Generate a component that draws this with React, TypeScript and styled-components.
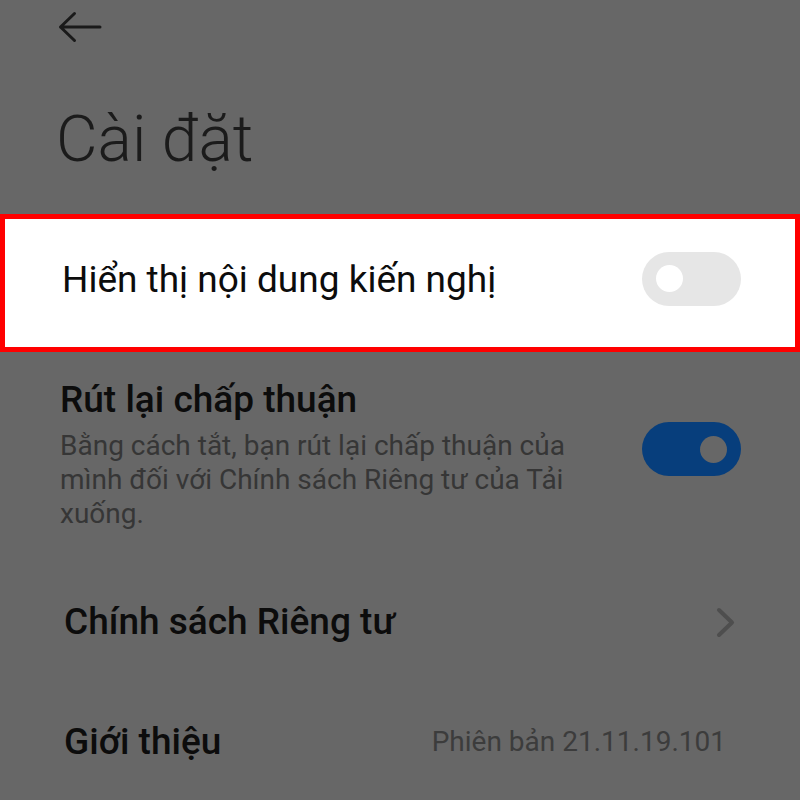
import React from "react";
import styled, { createGlobalStyle } from "styled-components";

const GlobalStyle = createGlobalStyle`
  html, body {
    margin: 0;
    padding: 0;
    background: #676767;
  }
  body {
    font-family: Roboto, "Noto Sans", "Liberation Sans", sans-serif;
  }
  * { box-sizing: border-box; }
`;

const Screen = styled.div`
  width: 800px;
  height: 800px;
  overflow: hidden;
  background: #676767;
  display: flex;
  flex-direction: column;
`;

const Header = styled.div`
  flex: none;
  height: 54px;
  display: flex;
  align-items: center;
  padding-left: 57px;
`;

const BackButton = styled.button`
  border: none;
  background: transparent;
  padding: 0;
  width: 46px;
  height: 32px;
  display: flex;
  align-items: center;
  justify-content: center;
`;

const Title = styled.h1`
  flex: none;
  margin: 46px 0 0 0;
  padding-left: 56px;
  font-family: Roboto, "Noto Sans", sans-serif;
  font-weight: 300;
  font-size: 64px;
  line-height: 80px;
  color: #1b1b1b;
`;

const Highlight = styled.div`
  flex: none;
  margin-top: 34px;
  height: 138px;
  border: 5px solid #ff0000;
  background: #ffffff;
  display: flex;
  align-items: center;
  justify-content: space-between;
  padding: 0 54px 9px 57px;
`;

const Label = styled.div<{ $weight?: number; $shift?: number }>`
  font-size: 37px;
  line-height: 44px;
  font-weight: ${(p) => p.$weight ?? 400};
  color: #0c0c0c;
  white-space: nowrap;
  margin-top: ${(p) => p.$shift ?? 0}px;
`;

const ConsentRow = styled.div`
  flex: none;
  display: flex;
  justify-content: space-between;
  padding: 26px 59px 0 60px;
  height: 220px;
`;

const ConsentText = styled.div`
  display: flex;
  flex-direction: column;
`;

const Description = styled.div`
  margin-top: 7px;
  font-size: 28px;
  line-height: 34px;
  color: #363636;
  white-space: nowrap;
`;

const Line = styled.span`
  display: block;
`;

const ToggleTrack = styled.div<{ $on: boolean }>`
  width: 99px;
  height: 54px;
  flex: none;
  border-radius: 27px;
  background: ${(p) => (p.$on ? "#073e7c" : "#e6e6e6")};
  display: flex;
  align-items: center;
  justify-content: ${(p) => (p.$on ? "flex-end" : "flex-start")};
  padding: 0 14px;
`;

const ToggleThumb = styled.div<{ $on: boolean }>`
  width: 27px;
  height: 27px;
  border-radius: 50%;
  background: ${(p) => (p.$on ? "#676767" : "#ffffff")};
`;

const ConsentToggleWrap = styled.div`
  margin-top: 44px;
`;

const NavRow = styled.div<{ $height: number; $right: number }>`
  flex: none;
  height: ${(p) => p.$height}px;
  display: flex;
  align-items: center;
  justify-content: space-between;
  padding: 0 ${(p) => p.$right}px 0 64px;
`;

const Version = styled.div`
  font-size: 28px;
  line-height: 32px;
  color: #3c3c3c;
  white-space: nowrap;
`;

const Toggle = ({ on }: { on: boolean }) => (
  <ToggleTrack $on={on}>
    <ToggleThumb $on={on} />
  </ToggleTrack>
);

export default function App() {
  return (
    <>
      <GlobalStyle />
      <Screen>
        <Header>
          <BackButton aria-label="Back">
            <svg width="46" height="32" viewBox="0 0 46 32" fill="none">
              <path
                d="M3.5 16 H43 M3.5 16 L17.5 2.5 M3.5 16 L17.5 29.5"
                stroke="#1a1a1a"
                strokeWidth="3"
                strokeLinecap="round"
                strokeLinejoin="round"
              />
            </svg>
          </BackButton>
        </Header>
        <Title>Cài đặt</Title>
        <Highlight>
          <Label $shift={3}>Hiển thị nội dung kiến nghị</Label>
          <Toggle on={false} />
        </Highlight>
        <ConsentRow>
          <ConsentText>
            <Label $weight={500}>Rút lại chấp thuận</Label>
            <Description>
              <Line>Bằng cách tắt, bạn rút lại chấp thuận của</Line>
              <Line>mình đối với Chính sách Riêng tư của Tải</Line>
              <Line>xuống.</Line>
            </Description>
          </ConsentText>
          <ConsentToggleWrap>
            <Toggle on={true} />
          </ConsentToggleWrap>
        </ConsentRow>
        <NavRow $height={100} $right={63}>
          <Label $weight={500}>Chính sách Riêng tư</Label>
          <svg width="24" height="33" viewBox="0 0 24 33" fill="none">
            <path
              d="M6 4 L19 16.5 L6 29"
              stroke="#4e4e4e"
              strokeWidth="4"
              strokeLinecap="round"
              strokeLinejoin="round"
            />
          </svg>
        </NavRow>
        <NavRow $height={139} $right={74}>
          <Label $weight={500}>Giới thiệu</Label>
          <Version>Phiên bản 21.11.19.101</Version>
        </NavRow>
      </Screen>
    </>
  );
}
